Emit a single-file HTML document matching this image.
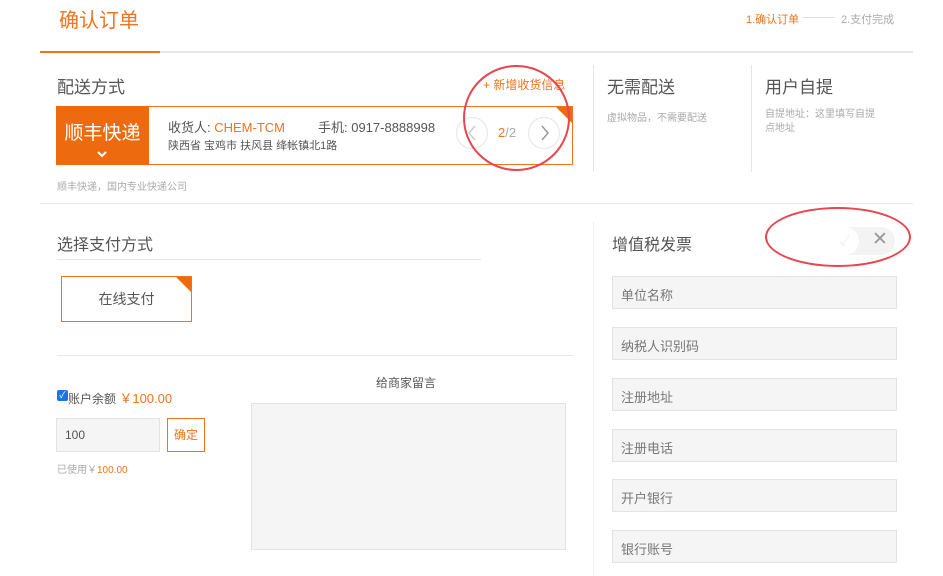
<!DOCTYPE html>
<html><head><meta charset="utf-8"><style>
*{margin:0;padding:0;box-sizing:border-box}
body{width:943px;height:576px;background:#fff;position:relative;overflow:hidden;font-family:"Liberation Sans","Noto Sans CJK SC",sans-serif;color:#555}
.a{position:absolute}
.or{color:#f0731e}
.fld{position:absolute;left:612px;width:285px;height:33px;background:#f5f5f5;border:1px solid #e3e3e3;font-size:13px;color:#777;padding:8px 0 0 8px}
</style></head><body>
<div class="a or" style="left:59px;top:4px;font-size:20px">确认订单</div>
<div class="a or" style="left:746px;top:11px;font-size:11px">1.确认订单</div>
<div class="a" style="left:803px;top:17px;width:32px;height:1px;background:#ddd"></div>
<div class="a" style="left:841px;top:11px;font-size:11px;color:#aaa">2.支付完成</div>
<div class="a" style="left:40px;top:51px;width:873px;height:2px;background:#e8e8e8"></div>
<div class="a" style="left:40px;top:51px;width:120px;height:2px;background:#f0731e"></div>

<div class="a" style="left:57px;top:73px;font-size:17px;color:#555">配送方式</div>
<div class="a or" style="left:483px;top:76px;font-size:12px">+ 新增收货信息</div>
<div class="a" style="left:56px;top:106px;width:517px;height:59px;border:1px solid #f0731e"></div>
<div class="a" style="left:56px;top:106px;width:93px;height:59px;background:#ee6a0e;color:#fff;font-size:19px;text-align:center;padding-top:12px">顺丰快递</div>
<svg class="a" style="left:97px;top:151px" width="10" height="7"><path d="M1 1L5 5L9 1" stroke="#fff" stroke-width="2" fill="none"/></svg>
<div class="a" style="left:168px;top:117px;font-size:13px">收货人: <span class="or">CHEM-TCM</span></div>
<div class="a" style="left:318px;top:117px;font-size:13px">手机: 0917-8888998</div>
<div class="a" style="left:168px;top:137px;font-size:11px">陕西省 宝鸡市 扶风县 绛帐镇北1路</div>
<div class="a" style="left:456px;top:117px;width:32px;height:32px;border:1px solid #e5e5e5;border-radius:50%"></div>
<svg class="a" style="left:467px;top:125px" width="10" height="16"><path d="M8 1L2 8L8 15" stroke="#ccc" stroke-width="1.5" fill="none"/></svg>
<div class="a" style="left:498px;top:125px;font-size:13px"><span class="or">2</span><span style="color:#aaa">/2</span></div>
<div class="a" style="left:528px;top:117px;width:32px;height:32px;border:1px solid #e5e5e5;border-radius:50%"></div>
<svg class="a" style="left:540px;top:125px" width="10" height="16"><path d="M2 1L8 8L2 15" stroke="#999" stroke-width="1.5" fill="none"/></svg>
<div class="a" style="left:556px;top:107px;width:0;height:0;border-top:16px solid #ee6a0e;border-left:16px solid transparent"></div>
<div class="a" style="left:57px;top:178px;font-size:10px;color:#aaa">顺丰快递，国内专业快递公司</div>
<div class="a" style="left:593px;top:65px;width:1px;height:107px;background:#e5e5e5"></div>
<div class="a" style="left:607px;top:73px;font-size:17px">无需配送</div>
<div class="a" style="left:607px;top:109px;font-size:10px;color:#aaa">虚拟物品，不需要配送</div>
<div class="a" style="left:751px;top:65px;width:1px;height:107px;background:#e5e5e5"></div>
<div class="a" style="left:765px;top:73px;font-size:17px">用户自提</div>
<div class="a" style="left:765px;top:108px;font-size:10px;color:#aaa;width:130px;line-height:14px">自提地址：这里填写自提<br>点地址</div>
<div class="a" style="left:463px;top:65px;width:107px;height:106px;border:2px solid #e8454f;border-radius:50%"></div>
<div class="a" style="left:40px;top:203px;width:873px;height:1px;background:#e8e8e8"></div>

<div class="a" style="left:57px;top:231px;font-size:16px">选择支付方式</div>
<div class="a" style="left:57px;top:259px;width:424px;height:1px;background:#e5e5e5"></div>
<div class="a" style="left:61px;top:276px;width:131px;height:46px;border:1px solid #f0731e;font-size:14px;text-align:center;line-height:44px">在线支付</div>
<div class="a" style="left:176px;top:277px;width:0;height:0;border-top:15px solid #ee6a0e;border-left:15px solid transparent"></div>
<div class="a" style="left:57px;top:355px;width:516px;height:1px;background:#e8e8e8"></div>
<div class="a" style="left:57px;top:390px;width:11px;height:11px;background:#1a73e8;border-radius:2px;color:#fff;font-size:9px;line-height:11px;text-align:center">✓</div>
<div class="a" style="left:68px;top:388px;font-size:12px">账户余额 <span class="or" style="font-size:13px">￥100.00</span></div>
<div class="a" style="left:56px;top:418px;width:104px;height:34px;background:#f5f5f5;border:1px solid #e3e3e3;font-size:12px;padding:9px 0 0 8px">100</div>
<div class="a or" style="left:167px;top:418px;width:38px;height:34px;border:1px solid #f0731e;font-size:12px;text-align:center;line-height:32px">确定</div>
<div class="a" style="left:57px;top:461px;font-size:10px;color:#aaa">已使用￥<span class="or">100.00</span></div>
<div class="a" style="left:376px;top:374px;font-size:12px">给商家留言</div>
<div class="a" style="left:251px;top:403px;width:315px;height:147px;background:#f5f5f5;border:1px solid #e3e3e3"></div>

<div class="a" style="left:593px;top:222px;width:1px;height:354px;background:#eee"></div>
<div class="a" style="left:612px;top:231px;font-size:16px">增值税发票</div>
<div class="a" style="left:831px;top:227px;width:64px;height:28px;background:#f3f3f3;border-radius:14px"></div>
<div class="a" style="left:831px;top:227px;width:28px;height:28px;background:#fff;border-radius:50%;color:#eee;text-align:center;line-height:28px;font-size:14px">✓</div>
<div class="a" style="left:872px;top:228px;color:#999;font-size:19px">✕</div>
<div class="a" style="left:765px;top:207px;width:146px;height:60px;border:2px solid #e8454f;border-radius:50%"></div>
<div class="fld" style="top:276px">单位名称</div>
<div class="fld" style="top:327px">纳税人识别码</div>
<div class="fld" style="top:378px">注册地址</div>
<div class="fld" style="top:429px">注册电话</div>
<div class="fld" style="top:479px">开户银行</div>
<div class="fld" style="top:530px">银行账号</div>
</body></html>
